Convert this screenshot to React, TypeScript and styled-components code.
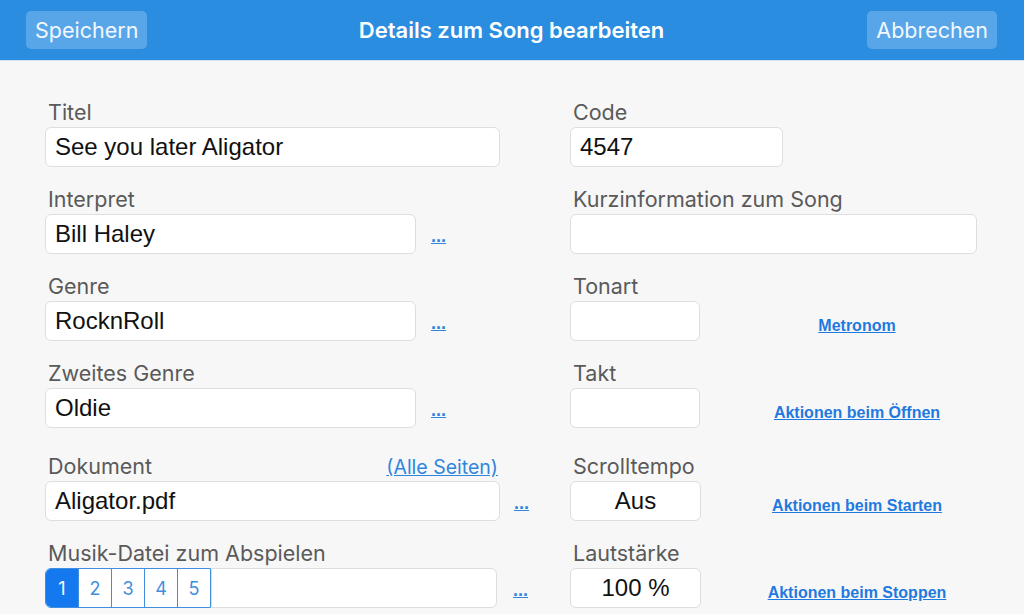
import React from "react";
import styled, { createGlobalStyle } from "styled-components";

const Global = createGlobalStyle`
  html, body { margin: 0; padding: 0; }
  body {
    width: 1024px; height: 614px; overflow: hidden;
    background: #f7f7f7;
    font-family: "Inter", "Liberation Sans", sans-serif;
  }
`;

const Header = styled.header`
  height: 60px;
  background: #2a8de0;
  border-bottom: 1px solid #cfe3f6;
  display: grid;
  grid-template-columns: 1fr auto 1fr;
  align-items: center;
  padding: 0 27px 0 26px;
`;

const HeaderButton = styled.button<{ $right?: boolean }>`
  justify-self: ${(p) => (p.$right ? "end" : "start")};
  height: 38px;
  padding: 0 9px;
  border: none;
  border-radius: 5px;
  background: rgba(255, 255, 255, 0.22);
  color: #f2f8ff;
  font-family: "Inter", "Liberation Sans", sans-serif;
  font-size: 21.5px;
  font-weight: 400;
`;

const Title = styled.h1`
  margin: 0;
  color: #ffffff;
  font-size: 22px;
  font-weight: 600;
`;

const Form = styled.main`
  display: grid;
  grid-template-columns: 525px 444px;
  padding: 39px 0 0 45px;
`;

const Column = styled.section`
  display: flex;
  flex-direction: column;
  gap: 20px;
`;

const Field = styled.div<{ $shift?: number }>`
  display: flex;
  flex-direction: column;
  gap: 3px;
  margin-top: ${(p) => p.$shift ?? 0}px;
`;

const LabelRow = styled.div<{ $w?: number }>`
  display: flex;
  justify-content: space-between;
  align-items: baseline;
  width: ${(p) => (p.$w ? `${p.$w}px` : "auto")};
  height: 24px;
`;

const Label = styled.label`
  padding-left: 3px;
  font-size: 21.5px;
  line-height: 24px;
  color: #5a5a5a;
  white-space: nowrap;
`;

const PagesLink = styled.a`
  font-size: 19.5px;
  line-height: 24px;
  color: #2f86dc;
  text-decoration: underline;
  padding-right: 2px;
`;

const InputRow = styled.div`
  display: flex;
  align-items: center;
`;

const Input = styled.div<{ $w: number; $center?: boolean; $joined?: boolean }>`
  box-sizing: border-box;
  width: ${(p) => p.$w}px;
  height: 40px;
  background: #ffffff;
  border: 1px solid #dedede;
  border-radius: ${(p) => (p.$joined ? "0 6px 6px 0" : "6px")};
  display: flex;
  align-items: center;
  justify-content: ${(p) => (p.$center ? "center" : "flex-start")};
  padding-left: ${(p) => (p.$center ? 0 : 9)}px;
  font-family: "Liberation Sans", Arial, sans-serif;
  font-size: 24px;
  color: #111;
`;

const Dots = styled.a<{ $gap: number }>`
  margin-left: ${(p) => p.$gap}px;
  margin-top: 4px;
  font-family: "Liberation Sans", Arial, sans-serif;
  font-weight: 700;
  font-size: 18px;
  color: #2f86dc;
  text-decoration: underline;
`;

const Segments = styled.div`
  display: flex;
  height: 40px;
  box-sizing: border-box;
  border: 1px solid #3f8fdc;
  border-radius: 6px 0 0 6px;
  overflow: hidden;
`;

const Segment = styled.div<{ $active?: boolean }>`
  width: 32px;
  display: flex;
  align-items: center;
  justify-content: center;
  font-size: 18px;
  color: ${(p) => (p.$active ? "#ffffff" : "#3f8fdc")};
  background: ${(p) => (p.$active ? "#1479ef" : "#ffffff")};
  & + & { border-left: 1px solid #3f8fdc; }
`;

const RightRow = styled.div`
  display: grid;
  grid-template-columns: 130px 1fr;
  align-items: end;
`;

const ActionLink = styled.a`
  justify-self: center;
  align-self: end;
  margin-bottom: 6px;
  font-family: "Liberation Sans", Arial, sans-serif;
  font-weight: 700;
  font-size: 16px;
  color: #1f7ae0;
  text-decoration: underline;
`;

export default function App() {
  return (
    <>
      <Global />
      <Header>
        <HeaderButton>Speichern</HeaderButton>
        <Title>Details zum Song bearbeiten</Title>
        <HeaderButton $right>Abbrechen</HeaderButton>
      </Header>
      <Form>
        <Column>
          <Field>
            <Label>Titel</Label>
            <Input $w={455}>See you later Aligator</Input>
          </Field>
          <Field>
            <Label>Interpret</Label>
            <InputRow>
              <Input $w={371}>Bill Haley</Input>
              <Dots $gap={15}>...</Dots>
            </InputRow>
          </Field>
          <Field>
            <Label>Genre</Label>
            <InputRow>
              <Input $w={371}>RocknRoll</Input>
              <Dots $gap={15}>...</Dots>
            </InputRow>
          </Field>
          <Field>
            <Label>Zweites Genre</Label>
            <InputRow>
              <Input $w={371}>Oldie</Input>
              <Dots $gap={15}>...</Dots>
            </InputRow>
          </Field>
          <Field $shift={6}>
            <LabelRow $w={455}>
              <Label>Dokument</Label>
              <PagesLink>(Alle Seiten)</PagesLink>
            </LabelRow>
            <InputRow>
              <Input $w={455}>Aligator.pdf</Input>
              <Dots $gap={14}>...</Dots>
            </InputRow>
          </Field>
          <Field>
            <Label>Musik-Datei zum Abspielen</Label>
            <InputRow>
              <Segments>
                {[1, 2, 3, 4, 5].map((n) => (
                  <Segment key={n} $active={n === 1}>
                    {n}
                  </Segment>
                ))}
              </Segments>
              <Input $w={286} $joined />
              <Dots $gap={16}>...</Dots>
            </InputRow>
          </Field>
        </Column>
        <Column>
          <Field>
            <Label>Code</Label>
            <Input $w={213}>4547</Input>
          </Field>
          <Field>
            <Label>Kurzinformation zum Song</Label>
            <Input $w={407} />
          </Field>
          <RightRow>
            <Field>
              <Label>Tonart</Label>
              <Input $w={130} />
            </Field>
            <ActionLink>Metronom</ActionLink>
          </RightRow>
          <RightRow>
            <Field>
              <Label>Takt</Label>
              <Input $w={130} />
            </Field>
            <ActionLink>Aktionen beim Öffnen</ActionLink>
          </RightRow>
          <RightRow>
            <Field $shift={6}>
              <Label>Scrolltempo</Label>
              <Input $w={131} $center>Aus</Input>
            </Field>
            <ActionLink>Aktionen beim Starten</ActionLink>
          </RightRow>
          <RightRow>
            <Field>
              <Label>Lautstärke</Label>
              <Input $w={131} $center>100 %</Input>
            </Field>
            <ActionLink>Aktionen beim Stoppen</ActionLink>
          </RightRow>
        </Column>
      </Form>
    </>
  );
}
